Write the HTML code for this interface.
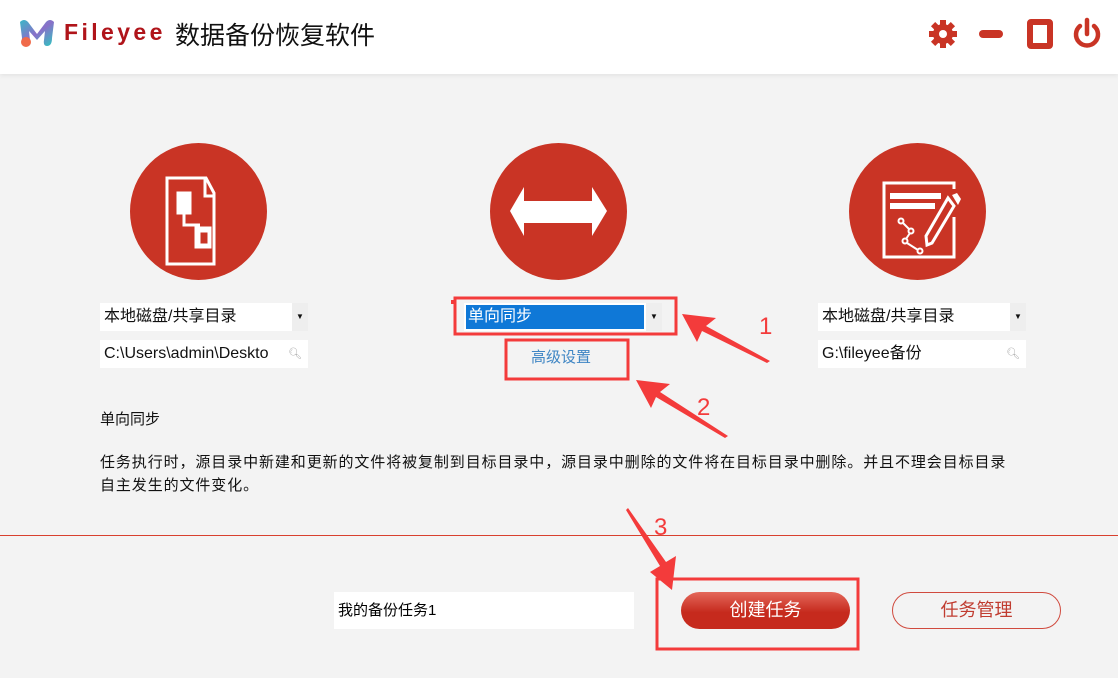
<!DOCTYPE html>
<html><head><meta charset="utf-8"><style>
*{margin:0;padding:0;box-sizing:border-box}
body{width:1118px;height:678px;background:#f3f3f3;position:relative;overflow:hidden;font-family:"Liberation Sans","Noto Sans CJK SC",sans-serif}
.hdr{position:absolute;left:0;top:0;width:1118px;height:74px;background:#fff;box-shadow:0 2px 4px rgba(0,0,0,.06)}
.abs{position:absolute}
.circ{position:absolute;width:137px;height:137px;border-radius:50%;background:#c93425;top:143px}
.sel{position:absolute;height:28px;background:#fff;font-size:16px;line-height:28px;padding-left:4px;color:#111}
.sel .dd{position:absolute;right:0;top:0;width:16px;height:28px;background:#eee;font-size:8px;text-align:center;line-height:28px}
.txt{font-size:15px;color:#111;position:absolute}
</style></head><body>
<div class="hdr"></div>
<svg class="abs" style="left:18px;top:18px" width="38" height="30" viewBox="0 0 38 30">
<defs><linearGradient id="g" x1="0" y1="0" x2="1" y2="1"><stop offset="0" stop-color="#3ab8c8"/><stop offset=".5" stop-color="#8a6fc9"/><stop offset="1" stop-color="#2cc7c0"/></linearGradient></defs>
<path d="M2 4 Q6 0 10 4 L19 16 L28 4 Q32 0 36 4 L34 20 Q34 28 29 28 Q25 28 26 22 L27 13 L19 22 L11 13 L12 22 Q13 28 9 28 Q3 28 4 20 Z" fill="url(#g)"/>
<circle cx="8" cy="24" r="5" fill="#f06a4a"/></svg>
<div class="abs" style="left:64px;top:19px;font-size:23px;color:#b0141a;letter-spacing:3.4px;font-weight:bold;font-family:'Liberation Sans',sans-serif">Fileyee</div>
<div class="abs" style="left:175px;top:16px;font-size:25px;color:#111">数据备份恢复软件</div>
<svg class="abs" style="left:927px;top:18px" width="32" height="32" viewBox="0 0 32 32"><g fill="#c93425"><circle cx="16" cy="16" r="10"/><g><rect x="13" y="2" width="6" height="28"/><rect x="2" y="13" width="28" height="6"/><rect x="13" y="2" width="6" height="28" transform="rotate(45 16 16)"/><rect x="13" y="2" width="6" height="28" transform="rotate(-45 16 16)"/></g></g><circle cx="16" cy="16" r="4" fill="#fff"/></svg>
<div class="abs" style="left:979px;top:30px;width:24px;height:8px;background:#c93425;border-radius:4px"></div>
<div class="abs" style="left:1027px;top:19px;width:26px;height:30px;border:6px solid #c93425;border-radius:4px"></div>
<svg class="abs" style="left:1071px;top:17px" width="32" height="34" viewBox="0 0 32 34"><path d="M9 9 A11 11 0 1 0 23 9" fill="none" stroke="#c93425" stroke-width="4.5" stroke-linecap="round"/><line x1="16" y1="3" x2="16" y2="17" stroke="#c93425" stroke-width="4.5" stroke-linecap="round"/></svg>

<div class="circ" style="left:130px"></div>
<div class="circ" style="left:490px"></div>
<div class="circ" style="left:849px"></div>
<svg class="abs" style="left:130px;top:143px" width="137" height="137" viewBox="0 0 137 137"><g fill="none" stroke="#fff" stroke-width="3"><path d="M37 35 H76 L84 50 V121 H37 Z"/><path d="M75 35 V53 H84"/><rect x="48" y="50" width="12" height="20" fill="#fff"/><path d="M54 70 V82 H70"/><rect x="69" y="88" width="10" height="14"/><rect x="66" y="85" width="14" height="19" fill="none"/></g></svg>
<svg class="abs" style="left:490px;top:143px" width="137" height="137" viewBox="0 0 137 137"><path d="M20 68 L34 44 V58 H102 V44 L117 68 L102 93 V80 H34 V93 Z" fill="#fff"/></svg>
<svg class="abs" style="left:849px;top:143px" width="137" height="137" viewBox="0 0 137 137"><g fill="none" stroke="#fff" stroke-width="3"><path d="M105 46 V40 H35 V114 H105 V74"/><path d="M77 93 L99 55 L105 63 L83 100 L78 102 Z"/></g><rect x="41" y="50" width="51" height="6" fill="#fff"/><rect x="41" y="60" width="45" height="6" fill="#fff"/><path d="M103 52 L109 62 L112 56 L108 50 Z" fill="#fff"/><g fill="none" stroke="#fff" stroke-width="2"><circle cx="52" cy="78" r="2.5"/><circle cx="62" cy="88" r="2.5"/><circle cx="56" cy="98" r="2.5"/><circle cx="71" cy="108" r="2.5"/><path d="M54 80 L60 86 M61 90 L57 96 M58 100 L69 107"/></g></svg>

<div class="sel" style="left:100px;top:303px;width:208px">本地磁盘/共享目录<div class="dd">▼</div></div>
<div class="sel" style="left:100px;top:340px;width:208px">C:\Users\admin\Deskto<span style="position:absolute;right:6px;color:#aaa;font-size:11px">🔍︎</span></div>
<div class="sel" style="left:464px;top:303px;width:198px;background:#fff;padding:0"><div style="position:absolute;left:2px;top:2px;width:178px;height:24px;background:#0f78d7;color:#fff;line-height:24px;padding-left:2px">单向同步</div><div class="dd">▼</div></div>
<div class="sel" style="left:818px;top:303px;width:208px">本地磁盘/共享目录<div class="dd">▼</div></div>
<div class="sel" style="left:818px;top:340px;width:208px">G:\fileyee备份<span style="position:absolute;right:6px;color:#aaa;font-size:11px">🔍︎</span></div>
<div class="abs" style="left:531px;top:346px;font-size:15px;color:#3f86c4">高级设置</div>
<div class="txt" style="left:100px;top:408px">单向同步</div>
<div class="txt" style="left:100px;top:451px;line-height:23px;width:1010px;letter-spacing:0.9px">任务执行时，源目录中新建和更新的文件将被复制到目标目录中，源目录中删除的文件将在目标目录中删除。并且不理会目标目录<br>自主发生的文件变化。</div>
<div class="abs" style="left:0;top:535px;width:1118px;height:1px;background:#d8402e"></div>
<div class="abs" style="left:334px;top:592px;width:300px;height:37px;background:#fff;font-size:15px;line-height:37px;padding-left:4px">我的备份任务1</div>
<div class="abs" style="left:681px;top:592px;width:169px;height:37px;border-radius:19px;background:linear-gradient(#e4685a,#c62a1d 55%);color:#fff;font-size:18px;text-align:center;line-height:37px">创建任务</div>
<div class="abs" style="left:892px;top:592px;width:169px;height:37px;border-radius:19px;border:1px solid #d04a3e;color:#c03c30;font-size:18px;text-align:center;line-height:35px">任务管理</div>

<svg class="abs" style="left:0;top:0" width="1118" height="678">
<g fill="none" stroke="#f33b3b" stroke-width="3">
<rect x="455" y="298" width="221" height="36"/><rect x="506" y="340" width="122" height="39"/><rect x="657" y="579" width="201" height="70"/></g>
<rect x="451" y="300" width="4" height="4" fill="#f33b3b"/>
<g fill="#f33b3b">
<polygon points="682,314 716,318 706,326 770,361 767,363 702,331 697,342"/>
<polygon points="636,380 670,384 660,392 728,436 725,438 656,397 651,408"/>
<polygon points="672,590 676,556 666,562 628,508 626,510 660,566 650,572"/></g>
<g fill="#f33b3b" font-family="Liberation Sans,sans-serif" font-size="24"><text x="759" y="334">1</text><text x="697" y="415">2</text><text x="654" y="535">3</text></g>
</svg>
</body></html>
